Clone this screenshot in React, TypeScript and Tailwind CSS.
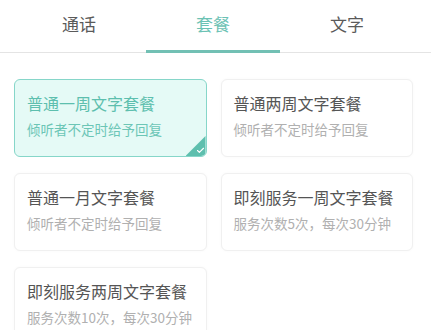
import { Check } from 'lucide-react'

const tabs = ['通话', '套餐', '文字']

const packages = [
  { title: '普通一周文字套餐', desc: '倾听者不定时给予回复', selected: true },
  { title: '普通两周文字套餐', desc: '倾听者不定时给予回复', selected: false },
  { title: '普通一月文字套餐', desc: '倾听者不定时给予回复', selected: false },
  { title: '即刻服务一周文字套餐', desc: '服务次数5次，每次30分钟', selected: false },
  { title: '即刻服务两周文字套餐', desc: '服务次数10次，每次30分钟', selected: false },
]

export default function App() {
  return (
    <div
      className="w-[431px] h-[330px] overflow-hidden bg-white"
      style={{ fontFamily: '"Noto Sans CJK SC", "Noto Sans", sans-serif' }}
    >
      <div className="border-b border-[#e4e4e4]">
        <div className="flex pl-[12px] pr-[17px]">
          {tabs.map((tab, i) => (
            <div
              key={tab}
              className={`flex-1 h-[53px] flex items-center justify-center text-[17px] -mb-px border-b-[3px] ${
                i === 1 ? 'text-[#6cc2b4] border-[#72c0b4]' : 'text-[#5a5a5a] border-transparent'
              }`}
            >
              <span className="mt-[-3px]">{tab}</span>
            </div>
          ))}
        </div>
      </div>

      <div className="grid grid-cols-2 gap-x-[14px] gap-y-[16px] pl-[14px] pr-[18px] pt-[26px]">
        {packages.map((p) => (
          <div
            key={p.title}
            className={`relative h-[78px] rounded-[6px] border overflow-hidden pl-[12px] pt-[10px] ${
              p.selected
                ? 'bg-[#e5faf6] border-[#86d6c9]'
                : 'bg-white border-[#f0f0f0] shadow-[0_0_3px_rgba(0,0,0,0.03)]'
            }`}
          >
            <div
              className={`text-[16px] leading-[26px] ${
                p.selected ? 'text-[#5dbfae]' : 'text-[#555]'
              }`}
            >
              {p.title}
            </div>
            <div
              className={`text-[13.5px] leading-[22px] mt-[2px] ${
                p.selected ? 'text-[#6cc6b6]' : 'text-[#b0b0b0]'
              }`}
            >
              {p.desc}
            </div>
            {p.selected && (
              <div className="absolute right-0 bottom-0 w-[20px] h-[20px] bg-[#5ebfae] [clip-path:polygon(100%_0,100%_100%,0_100%)]">
                <Check className="absolute right-[1px] bottom-[1px] w-[9px] h-[9px] text-white" strokeWidth={3} />
              </div>
            )}
          </div>
        ))}
      </div>
    </div>
  )
}
